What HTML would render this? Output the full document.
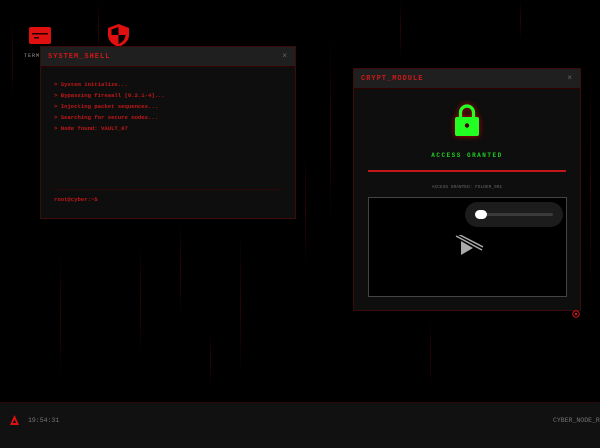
<!DOCTYPE html>
<html><head><style>
*{margin:0;padding:0;box-sizing:border-box}
body{width:600px;height:448px;background:#000;overflow:hidden;position:relative;font-family:"Liberation Mono",monospace}
.rain{position:absolute;width:1px;background:linear-gradient(#000,#2a0505,#000)}
.win{position:absolute;background:#0e0e0e;border:1px solid #3a0c0c}
.tb{height:20px;background:#1f1f1f;border-bottom:1px solid #300;position:relative}
.tt{position:absolute;left:7px;top:6px;color:#d01818;font-size:7px;font-weight:bold;letter-spacing:1px}
.x{position:absolute;right:8px;top:5px;color:#666;font-size:8px}
.ln{position:absolute;left:13px;color:#c41818;font-size:5.6px;font-weight:bold}
</style></head><body>
<div class="rain" style="left:12px;top:20px;height:80px"></div>
<div class="rain" style="left:98px;top:0;height:60px"></div>
<div class="rain" style="left:180px;top:220px;height:100px"></div>
<div class="rain" style="left:240px;top:230px;height:150px"></div>
<div class="rain" style="left:305px;top:150px;height:120px"></div>
<div class="rain" style="left:330px;top:30px;height:200px"></div>
<div class="rain" style="left:140px;top:240px;height:120px"></div>
<div class="rain" style="left:60px;top:250px;height:130px"></div>
<div class="rain" style="left:590px;top:60px;height:250px"></div>
<div class="rain" style="left:430px;top:320px;height:70px"></div>
<div class="rain" style="left:520px;top:0;height:40px"></div>
<div class="rain" style="left:400px;top:0;height:60px"></div>
<div class="rain" style="left:210px;top:330px;height:60px"></div>

<svg style="position:absolute;left:29px;top:27px" width="22" height="17" viewBox="0 0 22 17"><rect x="0" y="0" width="22" height="17" rx="2" fill="#e01010"/><rect x="3" y="6" width="16" height="1.5" fill="#200"/><rect x="5" y="10" width="5" height="1.5" fill="#200"/></svg>
<div style="position:absolute;left:24px;top:53px;color:#999;font-size:5px;letter-spacing:1px">TERM</div>
<svg style="position:absolute;left:108px;top:24px" width="21" height="23" viewBox="0 0 21 23"><path d="M10.5 0L21 4V11C21 17 16 21 10.5 23C5 21 0 17 0 11V4Z" fill="#e01010"/><path d="M10.5 3V11H3.5V5.5L10.5 3ZM10.5 11H17.5C17 16 14 18.5 10.5 20Z" fill="#000"/></svg>

<div class="win" style="left:40px;top:46px;width:256px;height:173px">
<div class="tb"><span class="tt">SYSTEM_SHELL</span><span class="x">×</span></div>
<div class="ln" style="top:34px">&gt; System initialize...</div>
<div class="ln" style="top:45px">&gt; Bypassing firewall [8.2.1-4]...</div>
<div class="ln" style="top:56px">&gt; Injecting packet sequences...</div>
<div class="ln" style="top:67px">&gt; Searching for secure nodes...</div>
<div class="ln" style="top:78px">&gt; Node found: VAULT_07</div>
<div style="position:absolute;left:13px;right:13px;top:142px;border-top:1px solid #2a0808"></div>
<div class="ln" style="top:149px">root@cyber:~$</div>
</div>

<div class="win" style="left:353px;top:68px;width:228px;height:243px">
<div class="tb"><span class="tt">CRYPT_MODULE</span><span class="x">×</span></div>
<svg style="position:absolute;left:100px;top:34px;filter:drop-shadow(0 0 3px #c00)" width="26" height="34" viewBox="0 0 26 34"><path d="M6.5 15V9.5a6.5 6.5 0 0 1 13 0V15" stroke="#22ff22" stroke-width="3.2" fill="none"/><rect x="1" y="14" width="24" height="19" rx="2" fill="#22ff22"/><circle cx="13" cy="22.5" r="2.2" fill="#400"/></svg>
<div style="position:absolute;left:0;right:0;top:83px;text-align:center;color:#22cc22;font-size:6px;font-weight:bold;letter-spacing:1.5px">ACCESS GRANTED</div>
<div style="position:absolute;left:14px;right:14px;top:101px;height:2px;background:#c01818"></div>
<div style="position:absolute;left:0;right:0;top:116px;text-align:center;color:#666;font-size:4.5px">ACCESS GRANTED: FOLDER_001</div>
<div style="position:absolute;left:14px;top:128px;width:199px;height:100px;background:#000;border:1px solid #444">
<div style="position:absolute;left:96px;top:4px;width:98px;height:25px;border-radius:13px;background:#1c1c1c"></div>
<div style="position:absolute;left:106px;top:15px;width:78px;height:3px;background:#3a3a3a;border-radius:2px"></div>
<div style="position:absolute;left:106px;top:12px;width:12px;height:9px;background:#fff;border-radius:5px"></div>
<svg style="position:absolute;left:86px;top:37px" width="28" height="22" viewBox="0 0 28 22"><path d="M6 6L18 13L6 20Z" fill="#aaa"/><path d="M1 1L27 15M3 -1L28 12" stroke="#aaa" stroke-width="1.5"/></svg>
</div>
</div>
<svg style="position:absolute;left:572px;top:310px" width="8" height="8"><circle cx="4" cy="4" r="3.2" stroke="#d01818" fill="none"/><circle cx="4" cy="4" r="1.2" fill="#d01818"/></svg>

<div style="position:absolute;left:0;top:402px;width:600px;height:46px;background:#111;border-top:1px solid #2a0808">
<svg style="position:absolute;left:9px;top:11px" width="11" height="12" viewBox="0 0 11 12"><path d="M5.5 1L10 11H1Z M5.5 5.5L3.8 9H7.2Z" fill="#e01010" fill-rule="evenodd"/></svg>
<div style="position:absolute;left:28px;top:14px;color:#777;font-size:6.5px">19:54:31</div>
<div style="position:absolute;left:553px;top:14px;color:#777;font-size:6.5px;white-space:nowrap">CYBER_NODE_RE</div>
</div>
</body></html>
